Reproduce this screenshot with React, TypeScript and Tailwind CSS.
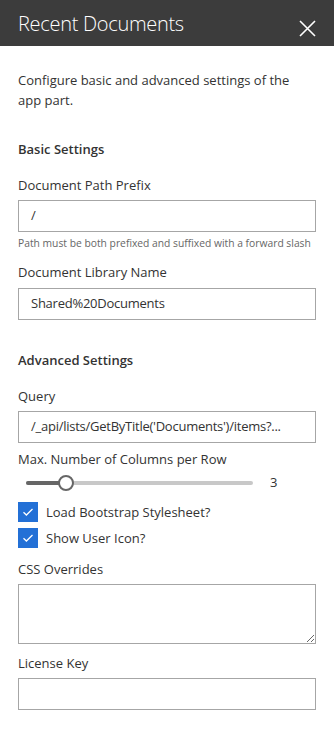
import React from "react";

const font = { fontFamily: '"Open Sans", "Noto Sans", sans-serif' };

function Label({ children }: { children: React.ReactNode }) {
  return <div className="text-[13px] leading-[20px] text-[#333333]">{children}</div>;
}

function Input({ value }: { value?: string }) {
  return (
    <div className="h-[32px] border border-[#a6a6a6] bg-white px-[12px] flex items-center text-[13px] tracking-[-0.25px] text-[#333333] whitespace-nowrap overflow-hidden">
      {value}
    </div>
  );
}

function Check({ label }: { label: string }) {
  return (
    <div className="flex items-center h-[20px]">
      <div className="w-[20px] h-[20px] bg-[#2370d6] flex items-center justify-center">
        <svg width="12" height="12" viewBox="0 0 12 12" fill="none">
          <path d="M1.5 6.3 L4.4 9 L10.5 3" stroke="white" strokeWidth="1.3" />
        </svg>
      </div>
      <span className="ml-[8px] text-[13px] leading-[20px] text-[#333333]">{label}</span>
    </div>
  );
}

export default function App() {
  return (
    <div className="w-[334px] h-[735px] bg-white" style={font}>
      <div className="h-[46px] bg-[#3c3c3c] flex items-center justify-between pl-[18px] pr-[18px]">
        <span className="text-white text-[20px] font-light tracking-[-0.3px] leading-none pt-[2px]">Recent Documents</span>
        <svg width="17" height="17" viewBox="0 0 17 17" className="mt-[10px]">
          <path d="M1 1 L16 16 M16 1 L1 16" stroke="white" strokeWidth="1.6" />
        </svg>
      </div>
      <div className="px-[18px]">
        <p className="pt-[24px] max-w-[285px] text-[13px] leading-[20px] text-[#333333]">
          Configure basic and advanced settings of the app part.
        </p>
        <div className="pt-[29px] text-[13px] font-semibold leading-[20px] text-[#333333]">Basic Settings</div>
        <div className="pt-[16px]"><Label>Document Path Prefix</Label></div>
        <div className="pt-[5px]"><Input value="/" /></div>
        <div className="pt-[3px] text-[10.3px] leading-[16px] text-[#666666] whitespace-nowrap">
          Path must be both prefixed and suffixed with a forward slash
        </div>
        <div className="pt-[11px]"><Label>Document Library Name</Label></div>
        <div className="pt-[6px]"><Input value="Shared%20Documents" /></div>
        <div className="pt-[30px] text-[13px] font-semibold leading-[20px] text-[#333333]">Advanced Settings</div>
        <div className="pt-[16px]"><Label>Query</Label></div>
        <div className="pt-[5px]"><Input value="/_api/lists/GetByTitle('Documents')/items?..." /></div>
        <div className="pt-[6px]"><Label>Max. Number of Columns per Row</Label></div>
        <div className="flex items-center h-[28px]">
          <div className="relative ml-[8px] w-[227px] h-[4px] rounded-full bg-[#c8c8c8]">
            <div className="absolute left-0 top-0 h-[4px] w-[40px] rounded-full bg-[#666666]" />
            <div className="absolute left-[32px] top-[-6px] w-[16px] h-[16px] rounded-full bg-white border-2 border-[#666666]" />
          </div>
          <span className="ml-[17px] text-[13px] text-[#333333]">3</span>
        </div>
        <div className="pt-[5px]"><Check label="Load Bootstrap Stylesheet?" /></div>
        <div className="pt-[6px]"><Check label="Show User Icon?" /></div>
        <div className="pt-[11px]"><Label>CSS Overrides</Label></div>
        <div className="pt-[5px]">
          <textarea className="block w-full h-[60px] border border-[#a6a6a6] resize-y outline-none" />
        </div>
        <div className="pt-[9px]"><Label>License Key</Label></div>
        <div className="pt-[5px]"><Input /></div>
      </div>
    </div>
  );
}
